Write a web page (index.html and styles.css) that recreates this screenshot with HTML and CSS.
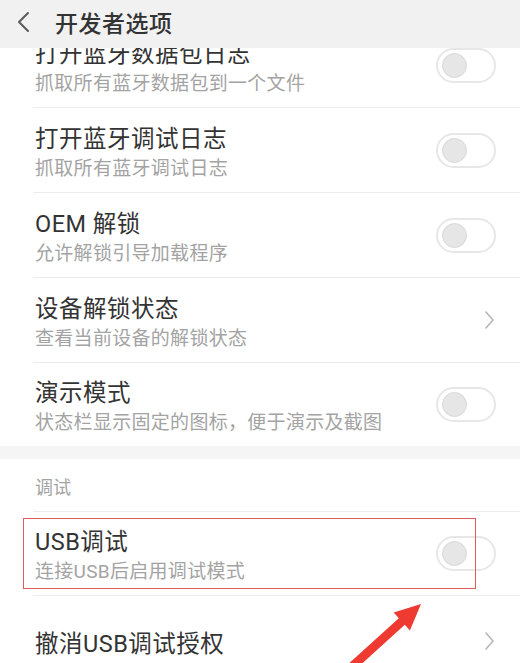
FILE: index.html
```html
<!DOCTYPE html>
<html lang="zh-CN">
<head>
    <meta charset="UTF-8">
    <meta name="viewport" content="width=device-width, initial-scale=1.0">
    <title>开发者选项</title>
    <link rel="stylesheet" href="styles.css">
</head>
<body>

    <div class="top-bar">
        <svg class="back-icon" width="16" height="22" viewBox="0 0 16 22">
            <path d="M13 2 L4 11 L13 20" fill="none" stroke="#5a5a5a" stroke-width="2" stroke-linecap="round" stroke-linejoin="round"/>
        </svg>
        <h1>开发者选项</h1>
    </div>

    <div class="settings-list">
        <div class="setting-row">
            <div class="setting-text">
                <p class="setting-title">打开蓝牙数据包日志</p>
                <p class="setting-desc">抓取所有蓝牙数据包到一个文件</p>
            </div>
            <span class="switch"><span class="knob"></span></span>
        </div>
        <div class="setting-row">
            <div class="setting-text">
                <p class="setting-title">打开蓝牙调试日志</p>
                <p class="setting-desc">抓取所有蓝牙调试日志</p>
            </div>
            <span class="switch"><span class="knob"></span></span>
        </div>
        <div class="setting-row">
            <div class="setting-text">
                <p class="setting-title">OEM 解锁</p>
                <p class="setting-desc">允许解锁引导加载程序</p>
            </div>
            <span class="switch"><span class="knob"></span></span>
        </div>
        <div class="setting-row">
            <div class="setting-text">
                <p class="setting-title">设备解锁状态</p>
                <p class="setting-desc">查看当前设备的解锁状态</p>
            </div>
            <svg class="chevron" width="12" height="22" viewBox="0 0 12 22">
                <path d="M3 3 L10 11 L3 19" fill="none" stroke="#b5b5b5" stroke-width="1.5" stroke-linecap="round" stroke-linejoin="round"/>
            </svg>
        </div>
        <div class="setting-row last">
            <div class="setting-text">
                <p class="setting-title">演示模式</p>
                <p class="setting-desc">状态栏显示固定的图标，便于演示及截图</p>
            </div>
            <span class="switch"><span class="knob"></span></span>
        </div>

        <div class="group-gap"></div>

        <div class="group-label">调试</div>

        <div class="setting-row highlighted">
            <div class="setting-text">
                <p class="setting-title">USB调试</p>
                <p class="setting-desc">连接USB后启用调试模式</p>
            </div>
            <span class="switch"><span class="knob"></span></span>
            <span class="mark-box"></span>
        </div>
        <div class="setting-row single">
            <div class="setting-text">
                <p class="setting-title">撤消USB调试授权</p>
            </div>
            <svg class="chevron" width="12" height="22" viewBox="0 0 12 22">
                <path d="M3 3 L10 11 L3 19" fill="none" stroke="#b5b5b5" stroke-width="1.5" stroke-linecap="round" stroke-linejoin="round"/>
            </svg>
        </div>
    </div>

    <!-- red pointer drawn over the screenshot -->
    <svg class="pointer-arrow" width="100" height="70" viewBox="330 595 100 70">
        <polygon fill="#ee3a30" points="421,604 409.9,630.4 404.8,624.8 348,676.3 342,669.7 398.8,618.2 393.7,612.6"/>
    </svg>

</body>
</html>
```

FILE: styles.css
```css
*,
::after,
::before {
    margin: 0;
    padding: 0;
    box-sizing: border-box;
}

html,
body {
    height: 100%;
    overflow: hidden;
}

body {
    font-family: Roboto, "Noto Sans CJK SC", sans-serif;
    background-color: #fff;
    color: #333;
    position: relative;
}

.top-bar {
    position: fixed;
    top: 0;
    left: 0;
    right: 0;
    height: 48px;
    z-index: 2;
    display: flex;
    align-items: center;
    padding-left: 15px;
    padding-bottom: 4px;
    background-color: #f1f1f1;
}

.top-bar h1 {
    font-size: 23px;
    font-weight: 500;
    color: #333;
    margin-left: 24px;
    letter-spacing: 0.5px;
}

.back-icon {
    display: block;
}

.settings-list {
    padding-top: 23px;
}

.setting-row {
    position: relative;
    height: 85px;
    margin-left: 33px;
    padding: 0 24px 0 2px;
    display: flex;
    align-items: center;
    justify-content: space-between;
    border-bottom: 1px solid #ececec;
}

.setting-row.last {
    height: 83px;
    border-bottom: none;
}

.setting-row.highlighted {
    height: 84px;
}

.setting-row.single {
    height: 90px;
}

.setting-text {
    padding-top: 6px;
}

.setting-title {
    font-size: 23.5px;
    line-height: 30px;
    color: #333;
    letter-spacing: 0.5px;
}

.setting-desc {
    font-size: 19px;
    line-height: 29px;
    color: #a3a3a3;
    letter-spacing: 0.3px;
}

.switch {
    flex-shrink: 0;
    width: 60px;
    height: 35px;
    border-radius: 18px;
    border: 2px solid #e7e7e7;
    background-color: #fff;
    display: flex;
    align-items: center;
    padding-left: 4px;
}

.knob {
    width: 25px;
    height: 25px;
    border-radius: 50%;
    background-color: #e6e6e6;
    border: 1px solid #d9d9d9;
}

.chevron {
    display: block;
    margin-right: 1px;
}

.group-gap {
    height: 13px;
    background-color: #f5f5f5;
}

.group-label {
    height: 53px;
    margin-left: 33px;
    padding: 15px 0 0 2px;
    font-size: 18px;
    line-height: 28px;
    color: #a3a3a3;
    border-bottom: 1px solid #ececec;
}

.mark-box {
    position: absolute;
    left: -10px;
    top: 6px;
    width: 453px;
    height: 71px;
    border: 1.5px solid #e25a5a;
}

.pointer-arrow {
    position: absolute;
    left: 330px;
    top: 595px;
    z-index: 3;
}
```
